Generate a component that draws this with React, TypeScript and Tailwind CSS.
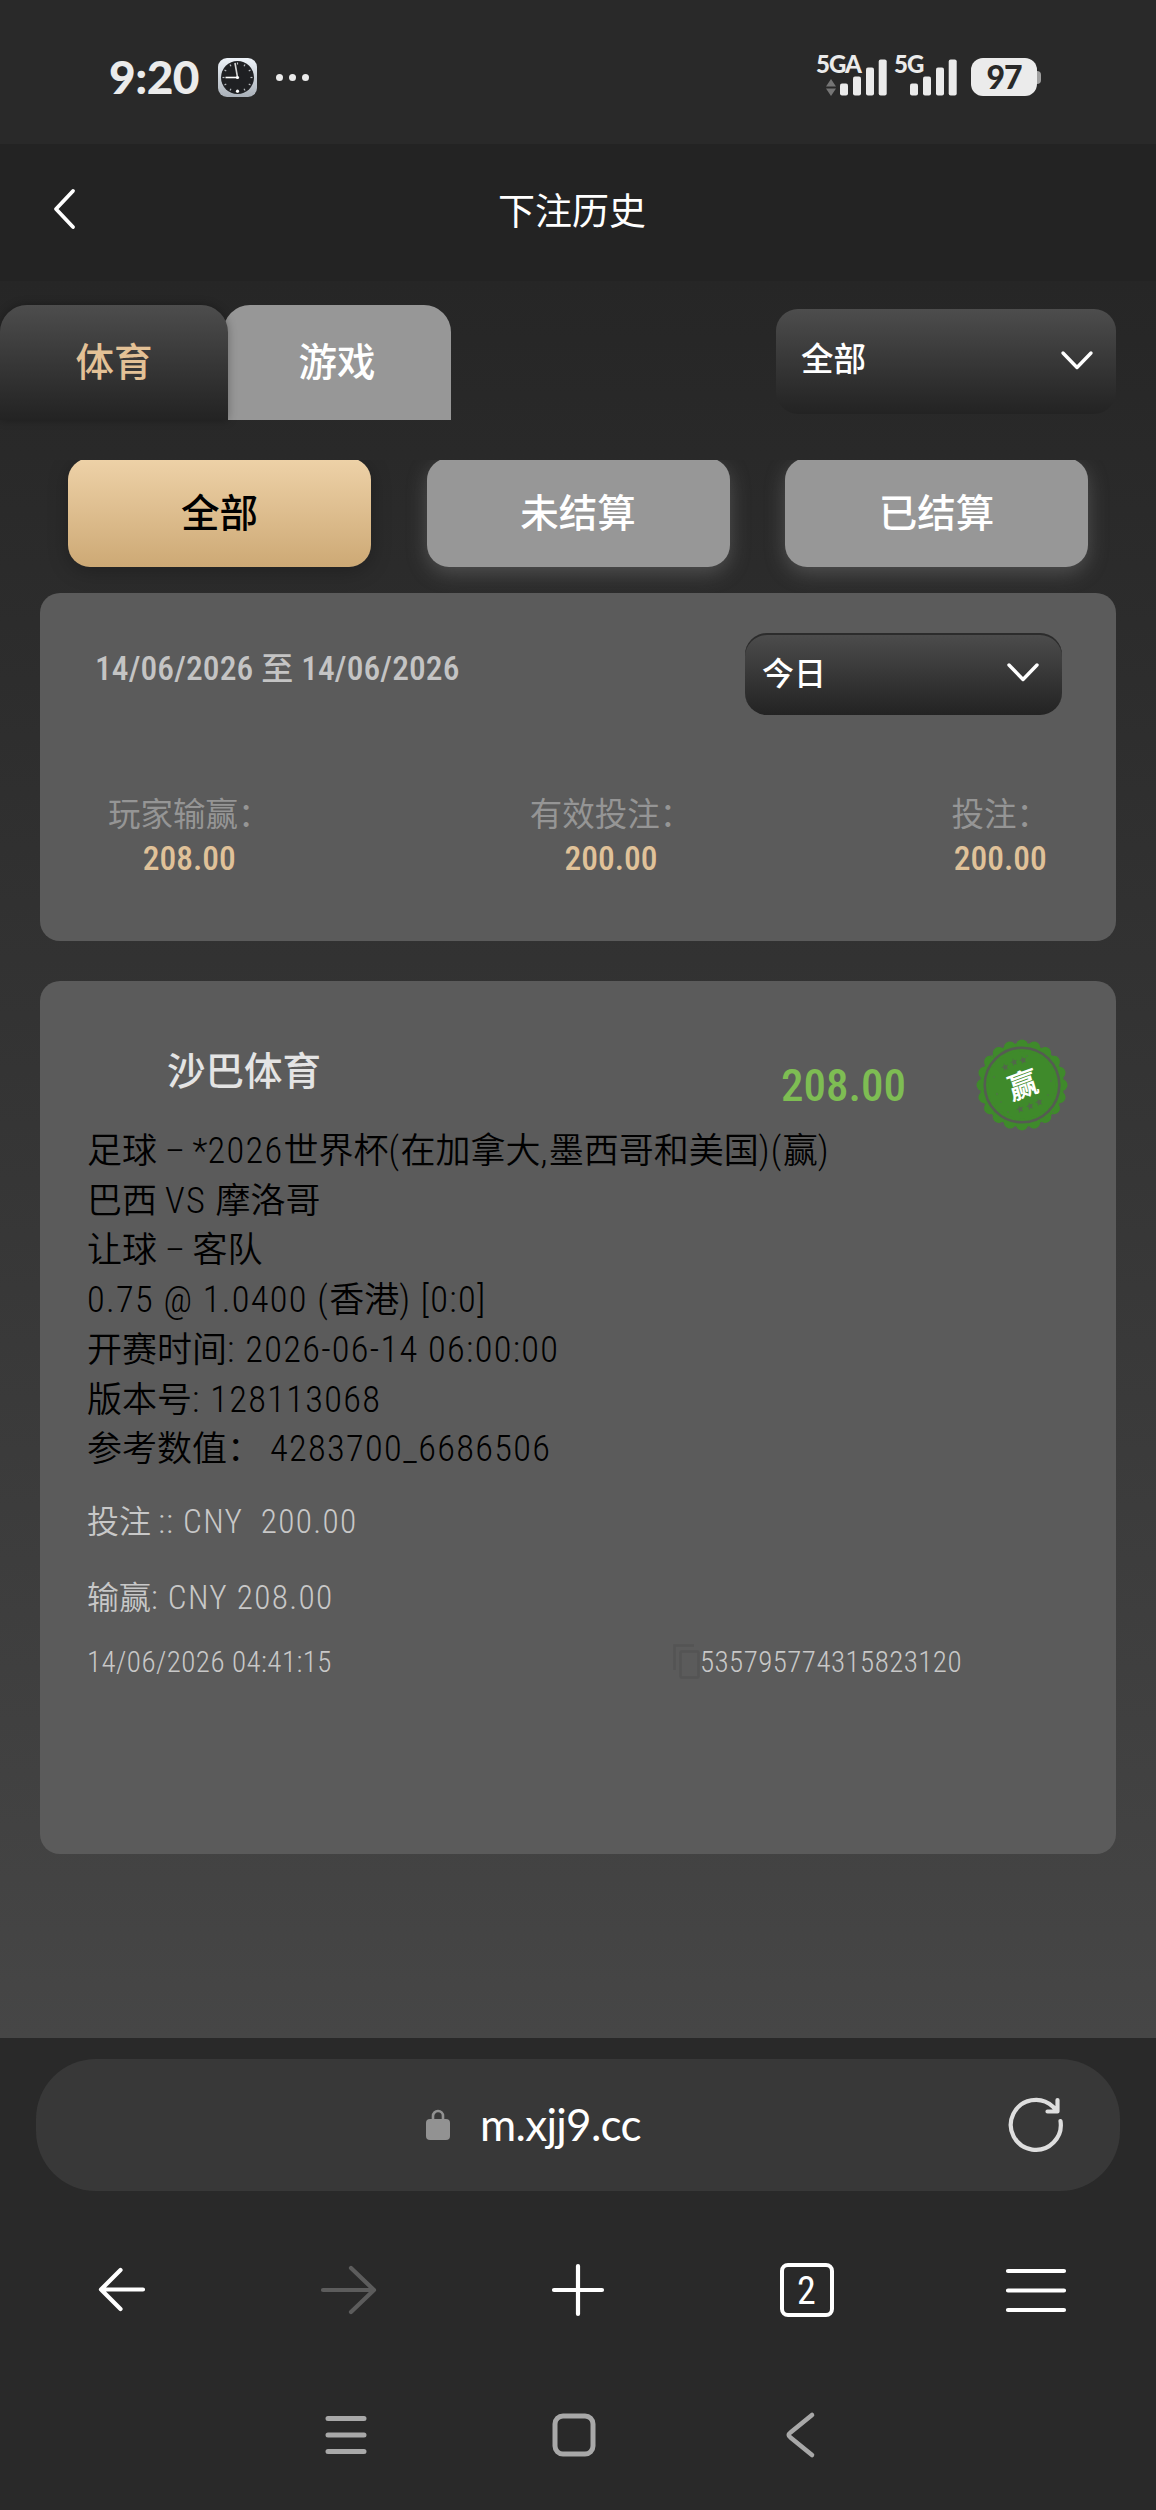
import React, { useState } from "react";
import clsx from "clsx";

const FILTROS = ["全部", "未结算", "已结算"];

const RESUMEN = [
  { etiqueta: "玩家输赢：", valor: "208.00" },
  { etiqueta: "有效投注：", valor: "200.00" },
  { etiqueta: "投注：", valor: "200.00" },
];

const DETALLE = [
  "足球 – *2026世界杯(在加拿大,墨西哥和美国)(赢)",
  "巴西 VS 摩洛哥",
  "让球 – 客队",
  "0.75 @ 1.0400 (香港) [0:0]",
  "开赛时间: 2026-06-14 06:00:00",
  "版本号: 128113068",
  "参考数值： 4283700_6686506",
];

/* Los tramos latinos van un poco más grandes y espaciados que los chinos */
function Linea({ texto }: { texto: string }) {
  const partes = texto.split(/([0-9A-Z@:[(),][0-9A-Z@:._ \](),-]*)/);
  return (
    <p>
      {partes.map((p, i) => (
        <span key={i} className={i % 2 ? "text-[1.04em] leading-none tracking-[1.3px]" : undefined}>{p}</span>
      ))}
    </p>
  );
}

/* Barras de cobertura */
function Senal() {
  return (
    <svg width="47" height="37" viewBox="0 0 47 37" fill="#ebebeb">
      <rect x="0" y="24.5" width="8" height="12" rx="2" />
      <rect x="13" y="17.5" width="8" height="19" rx="2" />
      <rect x="26" y="8.5" width="8" height="28" rx="2" />
      <rect x="38.7" y="0.5" width="8" height="36" rx="2" />
    </svg>
  );
}

function RelojApp() {
  const marcas = Array.from({ length: 12 }, (_, i) => i * 30);
  return (
    <svg width="39" height="39" viewBox="0 0 39 39">
      <defs>
        <linearGradient id="marco" x1="0" y1="0" x2="0" y2="1">
          <stop offset="0" stopColor="#eef3f9" />
          <stop offset="1" stopColor="#a9b0b8" />
        </linearGradient>
      </defs>
      <rect width="39" height="39" rx="9" fill="url(#marco)" />
      <circle cx="19.5" cy="19.5" r="16.5" fill="#1f2023" />
      {marcas.map((a) => (
        <path key={a} d="M19.5 4.5v2" stroke="#b9bcc0" strokeWidth="1.2" transform={`rotate(${a} 19.5 19.5)`} />
      ))}
      <path d="M19.5 19.5 17 5" stroke="#d5d5d5" strokeWidth="1.6" />
      <path d="M19.5 19.5H7.5" stroke="#fff" strokeWidth="1.6" />
      <circle cx="19.5" cy="19.5" r="1.6" fill="#fff" />
      <circle cx="19.5" cy="33.2" r="1.6" fill="#fff" />
    </svg>
  );
}

function BarraEstado() {
  return (
    <div className="flex h-[144px] items-center justify-between bg-[#292929] pr-[115px] pl-[109px] pt-[10px]">
      <div className="flex items-center">
        <span className="w-[109px] font-['Lato'] text-[46px] leading-none font-black tracking-[-0.5px] text-[#ebebeb]">9:20</span>
        <RelojApp />
        <div className="ml-[19px] flex gap-[6px]">
          <i className="size-[7px] rounded-full bg-[#ebebeb]" />
          <i className="size-[7px] rounded-full bg-[#ebebeb]" />
          <i className="size-[7px] rounded-full bg-[#ebebeb]" />
        </div>
      </div>
      <div className="flex items-center">
        <div className="relative flex items-end pl-[24px]">
          <span className="absolute -top-[7px] left-0 font-['Lato'] text-[24px] leading-none font-black tracking-[-1px] text-[#ebebeb]">5GA</span>
          <svg width="10" height="17" viewBox="0 0 10 17" className="mr-[4px] -ml-[14px]" fill="#757575">
            <path d="M5 0 10 7.5H0zM0 9.5h10L5 17z" />
          </svg>
          <Senal />
        </div>
        <div className="relative ml-[7px] pl-[16px]">
          <span className="absolute -top-[7px] left-0 font-['Lato'] text-[24px] leading-none font-black tracking-[-1px] text-[#ebebeb]">5G</span>
          <Senal />
        </div>
        <div className="ml-[14px] flex items-center">
          <div className="flex h-[38px] w-[66px] items-center justify-center rounded-[12px] bg-[#ebebeb] font-['Lato'] text-[32px] leading-none font-black tracking-[-1px] text-[#292929]">
            97
          </div>
          <i className="h-[13px] w-[4px] rounded-r-[4px] bg-[#a0a0a0]" />
        </div>
      </div>
    </div>
  );
}

function Flecha() {
  return (
    <svg width="34" height="22" viewBox="0 0 34 22" fill="none" stroke="#fff" strokeWidth="3.4" strokeLinecap="round" strokeLinejoin="round" className="-mt-[2px]">
      <path d="M3 3 17 17.5 31 3" />
    </svg>
  );
}

/* Sello verde de apuesta ganada */
function Sello() {
  const ondas = Array.from({ length: 20 }, (_, i) => i * 18);
  return (
    <div className="relative flex size-[92px] items-center justify-center">
      <svg viewBox="-46 -46 92 92" className="absolute inset-0" fill="#3f8a2b">
        <circle r="42" />
        {ondas.map((a) => (
          <circle key={a} cx="0" cy="-39.5" r="6" transform={`rotate(${a})`} />
        ))}
        <circle r="37.3" fill="none" stroke="#555c52" strokeWidth="2.6" />
        <g fill="#52684b">
          <path id="estrella" d="M0-3.6 1-1.2 3.6-1 1.6.8 2.2 3.4 0 2-2.2 3.4-1.6.8-3.6-1-1-1.2z" transform="translate(-17 -18) rotate(-20)" />
          <use href="#estrella" x="9" y="-5" />
          <use href="#estrella" x="18" y="-7" />
          <use href="#estrella" x="15" y="42" />
          <use href="#estrella" x="25" y="39" />
          <use href="#estrella" x="34" y="35" />
        </g>
        <g fill="#4b7a3f">
          <circle cx="-28" cy="-8" r="1" />
          <circle cx="-25" cy="9" r="1.2" />
          <circle cx="-21" cy="17" r="0.9" />
          <circle cx="29" cy="-4" r="1" />
          <circle cx="26" cy="10" r="0.9" />
          <circle cx="5" cy="-29" r="0.9" />
          <circle cx="-14" cy="27" r="1" />
          <circle cx="-30" cy="-29" r="1.2" />
          <circle cx="31" cy="27" r="1" />
        </g>
      </svg>
      <span className="relative -rotate-[20deg] skew-x-[-4deg] pt-px pl-px text-[30px] leading-none font-bold text-white">赢</span>
    </div>
  );
}

function Copiar() {
  return (
    <svg width="27" height="36" viewBox="0 0 27 36" fill="none" stroke="#545454" strokeWidth="2.5">
      <path d="M1.5 26V1.5H21" />
      <rect x="7.5" y="7.5" width="18" height="26" rx="1" />
    </svg>
  );
}

function Historial() {
  const [filtro, setFiltro] = useState(0);

  return (
    <main className="h-[1757px] bg-linear-to-b from-[#262626] to-[#464646]">
      {/* Pestañas y selector */}
      <div className="flex justify-between pt-[24px] pr-[40px]">
        <div className="flex h-[115px] text-[38.5px] font-medium">
          <button className="relative z-10 w-[228px] rounded-t-[27px] bg-linear-to-b from-[#4d4d4d] to-[#232323] text-[#e3c196] shadow-[0_0_10px_rgba(0,0,0,0.3)]">体育</button>
          <button className="-ml-[5px] w-[228px] rounded-t-[27px] bg-[#979797] text-white">游戏</button>
        </div>
        <button className="mt-[4px] flex h-[105px] w-[340px] items-center justify-between rounded-[22px] bg-linear-to-b from-[#4d4d4d] to-[#232323] pr-[22px] pl-[25px] text-[32.5px] font-medium text-white">
          <span className="pb-[3px]">全部</span>
          <Flecha />
        </button>
      </div>

      {/* Filtros */}
      <div className="mt-[40px] flex h-[133px] gap-[55.5px] overflow-hidden pl-[68px]">
        {FILTROS.map((f, i) => (
          <button
            key={f}
            onClick={() => setFiltro(i)}
            className={clsx(
              "-mt-[2px] h-[109px] w-[303px] shrink-0 rounded-[22px] pt-[2px] text-[38.5px] font-medium",
              filtro === i
                ? "bg-linear-to-b from-[#eed2a8] to-[#cda975] text-black shadow-[0_4px_20px_rgba(0,0,0,0.25)]"
                : "bg-[#979797] text-white shadow-[0_6px_20px_rgba(151,151,151,0.35)]"
            )}
          >
            {f}
          </button>
        ))}
      </div>

      {/* Resumen */}
      <section className="mx-[40px] h-[348px] rounded-[20px] bg-[#5b5b5b] pt-[40px]">
        <div className="flex justify-between pr-[54px] pl-[55px]">
          <p className="pt-[12px] text-[33.5px] leading-[48px] font-medium tracking-[0.1px] text-[#c4c4c4]">
            14/06/2026 <span className="text-[32px]">至</span> 14/06/2026
          </p>
          <button className="flex h-[82px] w-[317px] items-center justify-between rounded-[22px] bg-linear-to-b from-[#4d4d4d] to-[#232323] pr-[22px] pl-[17px] text-[32px] font-medium text-white shadow-[inset_0_2px_0_#2c2c2c]">
            今日
            <Flecha />
          </button>
        </div>
        <div className="mt-[78px] flex justify-between pr-[67px] pl-[68px] text-[32.5px] leading-[44px]">
          {RESUMEN.map((r, i) => (
            <div key={i} className="text-center">
              <p className="text-[#959595]">{r.etiqueta}</p>
              <p className="text-[33.5px] font-medium text-[#e0c299]">{r.valor}</p>
            </div>
          ))}
        </div>
      </section>

      {/* Apuesta */}
      <section className="mx-[40px] mt-[40px] h-[873px] rounded-[20px] bg-[#5b5b5b] px-[47px] pt-[58px]">
        <div className="flex h-[88px]">
          <h2 className="ml-[80px] pt-px text-[38.5px] leading-[64px] font-medium text-[#e4e4e4]">沙巴体育</h2>
          <span className="ml-auto pt-[15px] text-[45px] leading-[64px] font-medium text-[#7ebd53]">208.00</span>
          <div className="mr-px ml-[70px]">
            <Sello />
          </div>
        </div>
        <div className="text-[35px] leading-[49.7px] font-[350] whitespace-pre text-black">
          {DETALLE.map((l) => (
            <Linea key={l} texto={l} />
          ))}
        </div>
        <div className="mt-[9px] text-[32px] leading-[76px] font-[350] whitespace-pre text-[#c8c8c8]">
          <Linea texto="投注 :: CNY  200.00" />
          <Linea texto="输赢: CNY 208.00" />
        </div>
        <div className="flex items-center text-[29px] leading-[52px] font-[350] tracking-[0.45px] text-[#c8c8c8]">
          <span className="w-[586px]">14/06/2026 04:41:15</span>
          <Copiar />
          <span>535795774315823120</span>
        </div>
      </section>
    </main>
  );
}

function Navegador() {
  return (
    <footer className="h-[472px] bg-[#292929] pt-[21px]">
      <div className="mx-[36px] flex h-[132px] items-center rounded-[60px] bg-[#383838] pr-[55px] pl-[389px]">
        <svg width="26" height="32" viewBox="0 0 26 32" fill="#929292">
          <rect x="1" y="10" width="24" height="21" rx="4" />
          <path d="M8 11V7a5 5 0 0 1 10 0v4" fill="none" stroke="#929292" strokeWidth="2.6" />
        </svg>
        <span className="ml-[29px] pb-[2px] font-['Lato'] text-[44px] leading-none tracking-[-0.7px] text-white">m.xjj9.cc</span>
        <svg width="58" height="58" viewBox="0 0 58 58" fill="none" stroke="#dedede" strokeWidth="4.2" strokeLinecap="round" strokeLinejoin="round" className="ml-auto">
          <path d="M53.5 25A25 25 0 1 1 46 10.7l4 4M50.5 4v11.5H40.5" />
        </svg>
      </div>

      {/* Controles */}
      <div className="mt-[70px] flex items-center justify-between pr-[89px] pl-[98px] text-white">
        <svg width="48" height="58" viewBox="0 0 48 58" fill="none" stroke="currentColor" strokeWidth="4.2" strokeLinecap="round" strokeLinejoin="round">
          <path d="M45 28.5H3M22.5 9 3 28.5 22.5 48" />
        </svg>
        <svg width="58" height="58" viewBox="0 0 58 58" fill="none" stroke="#5c5c5c" strokeWidth="4.2" strokeLinecap="round" strokeLinejoin="round">
          <path d="M4 29H55M32 7 55 29 32 51" />
        </svg>
        <svg width="58" height="58" viewBox="0 0 58 58" fill="none" stroke="currentColor" strokeWidth="4.2" strokeLinecap="round">
          <path d="M5 29H53M29 5V53" />
        </svg>
        <div className="-mr-px flex size-[54px] items-center justify-center rounded-[8px] border-4 border-white pt-[2px] text-[38px] leading-none font-normal">2</div>
        <svg width="62" height="58" viewBox="0 0 62 58" fill="none" stroke="currentColor" strokeWidth="4.2" strokeLinecap="round">
          <path d="M3 10H59M3 29.5H59M3 49H59" />
        </svg>
      </div>

      {/* Botones del sistema */}
      <div className="mt-[92px] flex items-center pl-[325px] text-[#a8a8a8]">
        <svg width="42" height="48" viewBox="0 0 42 48" fill="none" stroke="currentColor" strokeWidth="5" strokeLinecap="round">
          <path d="M3 7.5H39M3 24H39M3 40.5H39" />
        </svg>
        <svg width="44" height="48" viewBox="0 0 44 48" fill="none" stroke="currentColor" strokeWidth="5" className="ml-[185px]">
          <rect x="3" y="5" width="38" height="38" rx="8" />
        </svg>
        <svg width="32" height="48" viewBox="0 0 32 48" fill="none" stroke="currentColor" strokeWidth="4.6" strokeLinecap="round" className="ml-[188px]">
          <path d="M28 4 6.5 21.5Q3 24 6.5 26.5L28 44" />
        </svg>
      </div>
    </footer>
  );
}

export default function App() {
  return (
    <div className="h-[2510px] w-[1156px] overflow-hidden bg-[#292929] font-['Roboto_Condensed','Noto_Sans_CJK_SC',sans-serif]">
      <BarraEstado />
      <header className="grid h-[137px] grid-cols-3 items-center bg-[#232323] px-[50px] text-white">
        <svg width="28" height="44" viewBox="0 0 28 44" fill="none" stroke="currentColor" strokeWidth="3.8" strokeLinecap="round" strokeLinejoin="round" className="-mt-[7px]">
          <path d="M23 4 6 22 23 40" />
        </svg>
        <h1 className="-ml-[12px] text-center text-[37px]">下注历史</h1>
      </header>
      <Historial />
      <Navegador />
    </div>
  );
}
